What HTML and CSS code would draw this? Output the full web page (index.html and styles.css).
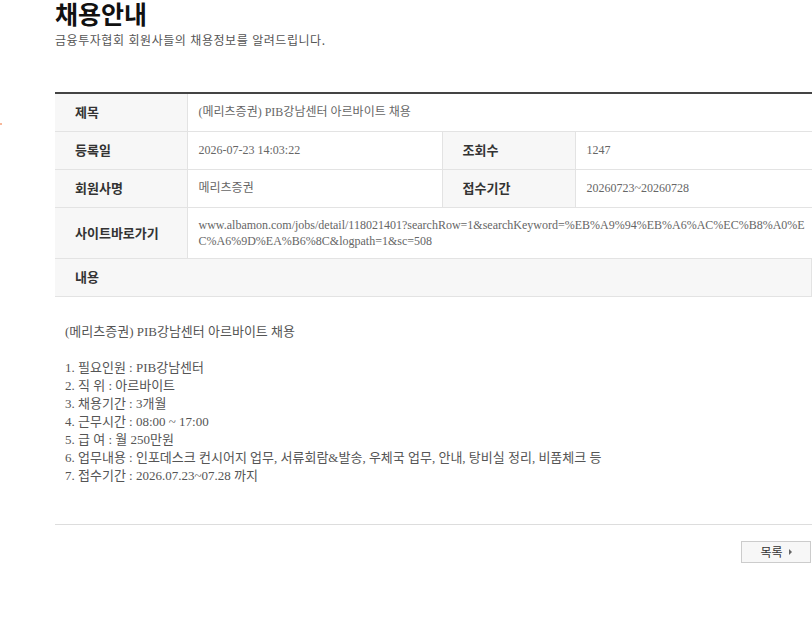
FILE: index.html
```html
<!DOCTYPE html>
<html lang="ko">
<head>
    <meta charset="UTF-8">
    <meta name="viewport" content="width=device-width, initial-scale=1.0">
    <title>채용안내</title>
    <link rel="stylesheet" href="styles.css">
</head>
<body>
    <span class="dot"></span>
    <div id="wrap">
        <div class="page-head">
            <h2 class="page-title">채용안내</h2>
            <p class="page-desc">금융투자협회 회원사들의 채용정보를 알려드립니다.</p>
        </div>

        <table class="view-table">
            <colgroup>
                <col style="width:132px">
                <col style="width:255px">
                <col style="width:133px">
                <col>
            </colgroup>
            <tr>
                <th>제목</th>
                <td colspan="3">(메리츠증권) PIB강남센터 아르바이트 채용</td>
            </tr>
            <tr>
                <th>등록일</th>
                <td>2026-07-23 14:03:22</td>
                <th>조회수</th>
                <td>1247</td>
            </tr>
            <tr>
                <th>회원사명</th>
                <td>메리츠증권</td>
                <th>접수기간</th>
                <td>20260723~20260728</td>
            </tr>
            <tr>
                <th>사이트바로가기</th>
                <td colspan="3" class="url">www.albamon.com/jobs/detail/118021401?searchRow=1&amp;searchKeyword=%EB%A9%94%EB%A6%AC%EC%B8%A0%EC%A6%9D%EA%B6%8C&amp;logpath=1&amp;sc=508</td>
            </tr>
            <tr>
                <th colspan="4">내용</th>
            </tr>
        </table>

        <div class="view-content">
            <p>(메리츠증권) PIB강남센터 아르바이트 채용</p>
            <p>
                1. 필요인원 : PIB강남센터<br>
                2. 직 위 : 아르바이트<br>
                3. 채용기간 : 3개월<br>
                4. 근무시간 : 08:00 ~ 17:00<br>
                5. 급 여 : 월 250만원<br>
                6. 업무내용 : 인포데스크 컨시어지 업무, 서류회람&amp;발송, 우체국 업무, 안내, 탕비실 정리, 비품체크 등<br>
                7. 접수기간 : 2026.07.23~07.28 까지
            </p>
        </div>

        <div class="btn-area">
            <a class="btn-list" href="#">목록 <span class="arr"></span></a>
        </div>
    </div>
</body>
</html>
```

FILE: styles.css
```css
html, body {
    margin: 0;
    padding: 0;
    background: #fff;
    overflow: hidden;
    font-family: "Liberation Serif", "Noto Sans CJK KR", serif;
    color: #666;
}

.dot {
    position: absolute;
    top: 123px;
    left: 0;
    width: 2px;
    height: 2px;
    border-radius: 1px;
    background: #f5a07a;
}

#wrap {
    width: 757px;
    margin-left: 55px;
}

.page-head {
    height: 92px;
}

.page-title {
    margin: 0;
    padding-top: 1px;
    font-family: "Noto Sans CJK KR", sans-serif;
    font-size: 25px;
    line-height: 25px;
    font-weight: bold;
    color: #111;
}

.page-desc {
    margin: 6px 0 0;
    font-family: "Noto Sans CJK KR", sans-serif;
    font-size: 12px;
    line-height: 16px;
    letter-spacing: 0.55px;
    color: #555;
}

.view-table {
    width: 100%;
    border-collapse: collapse;
    table-layout: fixed;
    border-top: 2px solid #444;
    font-size: 12px;
}

.view-table tr {
    height: 38px;
}

.view-table th,
.view-table td {
    padding: 9px 10px;
    line-height: 16px;
    border-bottom: 1px solid #e3e3e3;
    text-align: left;
    vertical-align: middle;
}

.view-table th {
    padding-left: 20px;
    background: #f7f7f7;
    font-family: "Noto Sans CJK KR", sans-serif;
    font-size: 13px;
    font-weight: bold;
    color: #333;
    border-right: 1px solid #e3e3e3;
}

.view-table td {
    padding-left: 11px;
    color: #666;
}

.view-table td + th {
    border-left: 1px solid #e3e3e3;
}

.view-table .url {
    padding-right: 2px;
    word-break: break-all;
}

.view-content {
    padding: 26px 10px 39px;
    border-bottom: 1px solid #ddd;
    font-size: 13px;
    line-height: 18px;
    color: #555;
}

.view-content p {
    margin: 0 0 18px;
}

.view-content p:last-child {
    margin-bottom: 0;
}

.btn-area {
    display: flex;
    justify-content: flex-end;
    padding-top: 16px;
    padding-right: 1px;
}

.btn-list {
    display: flex;
    align-items: center;
    justify-content: center;
    gap: 6px;
    width: 68px;
    height: 20px;
    border: 1px solid #ccc;
    background: #f7f7f7;
    font-family: "Noto Sans CJK KR", sans-serif;
    font-size: 12px;
    color: #333;
    text-decoration: none;
}

.btn-list .arr {
    width: 0;
    height: 0;
    border-top: 3px solid transparent;
    border-bottom: 3px solid transparent;
    border-left: 3px solid #666;
}
```
